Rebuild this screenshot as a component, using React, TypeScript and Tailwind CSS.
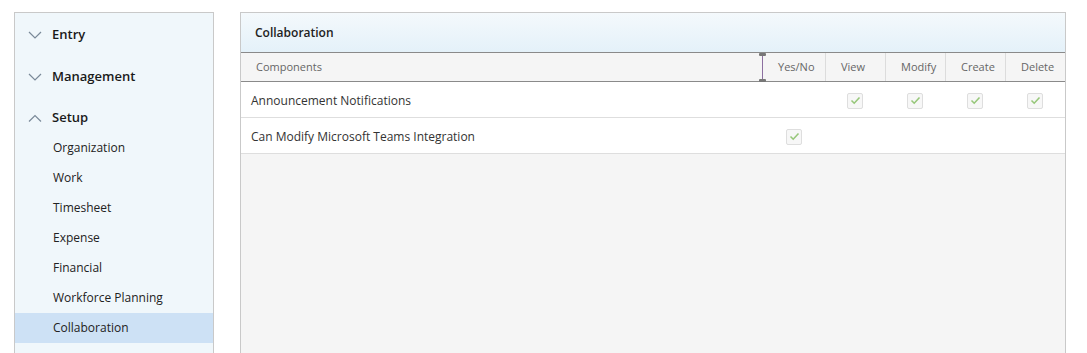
import React from 'react';

const font = { fontFamily: '"Open Sans", "Noto Sans", sans-serif' };

const Chevron: React.FC<{ up?: boolean }> = ({ up }) => (
  <svg width="14" height="8" viewBox="0 0 14 8" className="shrink-0">
    <path
      d={up ? 'M1 7.5 L7 1.5 L13 7.5' : 'M1 1 L7 7 L13 1'}
      fill="none"
      stroke="#7a8a99"
      strokeWidth="1.2"
    />
  </svg>
);

const Check: React.FC = () => (
  <div className="w-[16px] h-[16px] rounded-[2px] border border-[#dedede] bg-[#f7f7f7] flex items-center justify-center">
    <svg width="11" height="9" viewBox="0 0 11 9">
      <path d="M1.5 4.5 L4.2 7.2 L9.5 1.5" fill="none" stroke="#97c77a" strokeWidth="1.6" />
    </svg>
  </div>
);

const subItems = ['Organization', 'Work', 'Timesheet', 'Expense', 'Financial', 'Workforce Planning', 'Collaboration'];

const cols = ['Yes/No', 'View', 'Modify', 'Create', 'Delete'];

const rows: { name: string; checks: boolean[] }[] = [
  { name: 'Announcement Notifications', checks: [false, true, true, true, true] },
  { name: 'Can Modify Microsoft Teams Integration', checks: [true, false, false, false, false] },
];

const colWidths = ['w-[62px]', 'w-[60px]', 'w-[60px]', 'w-[60px]', 'w-[60px]'];

export default function App() {
  return (
    <div className="w-[1087px] h-[353px] bg-white flex pl-[14px] pt-[12px] overflow-hidden" style={font}>
      {/* sidebar */}
      <div className="w-[200px] h-[360px] shrink-0 border border-[#c9c9c9] bg-[#f0f7fb] pt-[1px]">
        <div className="h-[42px] flex items-center gap-[10px] pl-[13px] text-[13px] font-semibold text-[#1a1a1a]">
          <Chevron />
          <span>Entry</span>
        </div>
        <div className="h-[42px] flex items-center gap-[10px] pl-[13px] text-[13px] font-semibold text-[#1a1a1a]">
          <Chevron />
          <span>Management</span>
        </div>
        <div className="h-[35px] flex items-center gap-[10px] pl-[13px] pt-[5px] text-[13px] font-semibold text-[#1a1a1a]">
          <Chevron up />
          <span>Setup</span>
        </div>
        {subItems.map((s) => (
          <div
            key={s}
            className={
              s === 'Collaboration'
                ? 'h-[30px] flex items-center pl-[38px] text-[12px] text-[#222] bg-[#cde1f5]'
                : 'h-[30px] flex items-center pl-[38px] text-[12px] text-[#222]'
            }
          >
            {s}
          </div>
        ))}
      </div>

      {/* main panel */}
      <div className="ml-[26px] w-[826px] h-[360px] shrink-0 border border-[#c9c9c9] bg-[#f5f5f5] flex flex-col">
        <div className="h-[40px] flex items-center pl-[14px] text-[12px] font-semibold text-[#222] bg-gradient-to-b from-[#f4f9fc] to-[#e4f1f9] border-b border-[#8a8a8a]">
          Collaboration
        </div>
        <div className="h-[29px] flex bg-[#f5f5f5] border-b border-[#8a8a8a] text-[11px] text-[#666]">
          <div className="flex-1 flex items-center pl-[15px] relative">
            Components
            <div className="absolute right-0 top-0 bottom-0 w-[1px] bg-[#8c6fa0]" />
            <div className="absolute right-[-3px] top-0 w-[7px] h-[3px] bg-[#777] rounded-[1px]" />
            <div className="absolute right-[-3px] bottom-[-1px] w-[7px] h-[3px] bg-[#777] rounded-[1px]" />
          </div>
          {cols.map((c, i) => (
            <div
              key={c}
              className={`${colWidths[i]} flex items-center pl-[15px] ${i > 0 ? 'border-l border-[#dcdcdc]' : ''}`}
            >
              {c}
            </div>
          ))}
        </div>
        {rows.map((r) => (
          <div key={r.name} className="h-[36px] flex bg-white border-b border-[#dedede] text-[12px] text-[#333] pt-[2px]">
            <div className="flex-1 flex items-center pl-[10px]">{r.name}</div>
            {r.checks.map((c, i) => (
              <div key={i} className={`${colWidths[i]} flex items-center justify-center`}>
                {c && <Check />}
              </div>
            ))}
          </div>
        ))}
      </div>
    </div>
  );
}
